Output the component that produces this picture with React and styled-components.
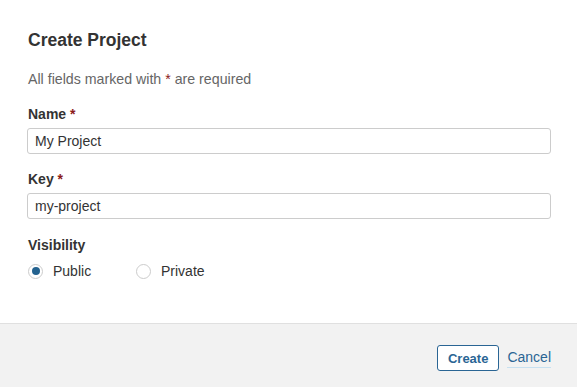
import React from "react";
import styled, { createGlobalStyle } from "styled-components";

const Global = createGlobalStyle`
  html, body { margin: 0; padding: 0; background: #fff; }
  body { font-family: "Liberation Sans", Arial, sans-serif; color: #333; }
  * { box-sizing: border-box; }
`;

const Dialog = styled.div`
  width: 577px;
  height: 387px;
  display: flex;
  flex-direction: column;
  background: #fff;
`;

const Body = styled.div`
  flex: 1;
  padding: 28px 26px 0 27px;
  display: flex;
  flex-direction: column;
`;

const Title = styled.h2`
  margin: 0 0 0 1px;
  font-size: 17.5px;
  line-height: 24px;
  font-weight: 700;
  color: #333;
`;

const Note = styled.p`
  margin: 17px 0 0 1px;
  font-size: 14.2px;
  line-height: 20px;
  color: #666;
`;

const Star = styled.span`
  color: #8b1a1a;
`;

const Field = styled.div`
  display: flex;
  flex-direction: column;
  margin-top: ${(p) => p.$top}px;
`;

const Label = styled.label`
  margin-left: 1px;
  font-size: 14px;
  line-height: 20px;
  font-weight: 700;
  color: #333;
`;

const Input = styled.input`
  margin-top: 4px;
  height: 26px;
  width: 100%;
  border: 1px solid #ccc;
  border-radius: 3px;
  padding: 0 7px;
  font-family: "Liberation Sans", Arial, sans-serif;
  font-size: 14px;
  color: #333;
  background: #fff;
  outline: none;
`;

const RadioRow = styled.div`
  display: flex;
  margin-top: 6px;
  margin-left: 1px;
`;

const RadioOption = styled.label`
  display: flex;
  align-items: center;
  gap: 10px;
  min-width: 108px;
  height: 20px;
  font-size: 14px;
  color: #333;
`;

const Circle = styled.span`
  width: 15px;
  height: 15px;
  border-radius: 50%;
  border: 1px solid #ccc;
  background: #fff;
  display: flex;
  align-items: center;
  justify-content: center;
  &::after {
    content: "";
    width: 8px;
    height: 8px;
    border-radius: 50%;
    background: ${(p) => (p.$checked ? "#24628f" : "transparent")};
  }
`;

const Footer = styled.div`
  height: 64px;
  border-top: 1px solid #e0e0e0;
  background: #f2f2f2;
  display: flex;
  justify-content: flex-end;
  align-items: flex-start;
  gap: 8px;
  padding: 21px 26px 0 0;
`;

const Button = styled.button`
  height: 26px;
  padding: 0 10px;
  border: 1px solid #2a6594;
  border-radius: 3px;
  background: #fff;
  color: #2a6594;
  font-family: "Liberation Sans", Arial, sans-serif;
  font-size: 13px;
  font-weight: 700;
`;

const LinkButton = styled.a`
  margin-top: 3px;
  font-size: 14px;
  line-height: 18px;
  color: #2a6594;
  text-decoration: none;
  border-bottom: 1px solid #c7e0f0;
  height: 20px;
`;

export default function App() {
  return (
    <>
      <Global />
      <Dialog>
        <Body>
          <Title>Create Project</Title>
          <Note>
            All fields marked with <Star>*</Star> are required
          </Note>
          <Field $top={15}>
            <Label>
              Name <Star>*</Star>
            </Label>
            <Input defaultValue="My Project" />
          </Field>
          <Field $top={15}>
            <Label>
              Key <Star>*</Star>
            </Label>
            <Input defaultValue="my-project" />
          </Field>
          <Field $top={16}>
            <Label>Visibility</Label>
            <RadioRow>
              <RadioOption>
                <Circle $checked />
                Public
              </RadioOption>
              <RadioOption>
                <Circle />
                Private
              </RadioOption>
            </RadioRow>
          </Field>
        </Body>
        <Footer>
          <Button>Create</Button>
          <LinkButton href="#">Cancel</LinkButton>
        </Footer>
      </Dialog>
    </>
  );
}
